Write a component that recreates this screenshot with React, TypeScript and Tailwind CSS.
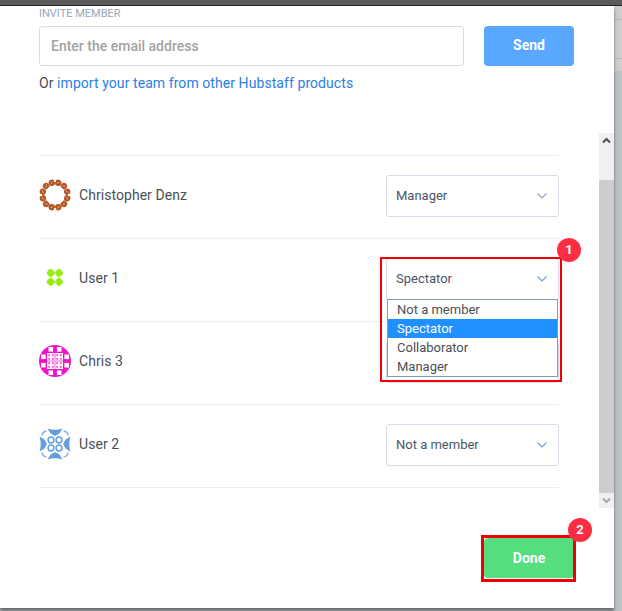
import type { ReactNode } from "react";

const font = { fontFamily: "Roboto, 'Liberation Sans', sans-serif" };

function Chevron({ active }: { active?: boolean }) {
  return (
    <svg width="12" height="8" viewBox="0 0 12 8" fill="none" className="shrink-0">
      <path d="M1.5 1.5 L6 6 L10.5 1.5" stroke={active ? "#6f9fd0" : "#9a9fb5"} strokeWidth="1.1" />
    </svg>
  );
}

function Avatar1() {
  const blobs = Array.from({ length: 12 }, (_, i) => 15 + i * 30);
  return (
    <svg width="32" height="32" viewBox="0 0 32 32">
      {blobs.map((a) => (
        <g key={a} transform={`rotate(${a} 16 16)`}>
          <circle cx="16" cy="3.4" r="3.2" fill="#b5521f" />
          <path d="M14.8 4.3 L17.2 2.4" stroke="#ffffff" strokeWidth="0.5" />
        </g>
      ))}
      {[0, 90, 180, 270].map((a) => (
        <path key={a} transform={`rotate(${a} 16 16)`} d="M16 0 L14.8 3 L17.2 3 Z" fill="#ffffff" />
      ))}
      <rect x="7.5" y="7.5" width="17" height="17" rx="5" fill="#ffffff" />
    </svg>
  );
}

function Avatar2() {
  const pts = [[11.7, 11], [20, 11], [11.7, 19.8], [20, 19.8]];
  return (
    <svg width="32" height="32" viewBox="0 0 32 32">
      <g fill="#96ee0e">
        {pts.map(([x, y]) => (
          <g key={`${x}-${y}`}>
            <circle cx={x} cy={y} r="3.4" />
            <path d={`M${x} ${y - 4.6} L${x + 4.4} ${y} L${x} ${y + 4.6} L${x - 4.4} ${y} Z`} />
          </g>
        ))}
      </g>
    </svg>
  );
}

function Avatar3() {
  const c = "#f012c8";
  const small = [10.2, 13.8, 18.2, 21.8];
  return (
    <svg width="32" height="32" viewBox="0 0 32 32">
      <circle cx="16" cy="16" r="16" fill={c} />
      <g fill="#fff">
        <rect x="9.5" y="2" width="4.6" height="4.6" />
        <rect x="17.9" y="2" width="4.6" height="4.6" />
        <rect x="9.5" y="25.4" width="4.6" height="4.6" />
        <rect x="17.9" y="25.4" width="4.6" height="4.6" />
        <rect x="2" y="9.5" width="4.6" height="4.6" />
        <rect x="2" y="17.9" width="4.6" height="4.6" />
        <rect x="25.4" y="9.5" width="4.6" height="4.6" />
        <rect x="25.4" y="17.9" width="4.6" height="4.6" />
        <rect x="8" y="8" width="16" height="16" />
      </g>
      <rect x="15.2" y="8" width="1.6" height="16" fill="#f7a0e6" />
      <rect x="8" y="15.2" width="16" height="1.6" fill="#f7a0e6" />
      {small.map((x) =>
        small.map((y) => (
          <rect key={`${x}-${y}`} x={x - 1} y={y - 1} width="2" height="2" fill="#f565da" />
        ))
      )}
    </svg>
  );
}

function Avatar4() {
  const c = "#639fd8";
  return (
    <svg width="32" height="32" viewBox="0 0 32 32">
      {[0, 90, 180, 270].map((a) => (
        <g key={a} transform={`rotate(${a} 16 16)`}>
          <path d="M8.5 0.5 Q16 3 23.5 0.5 L20.5 5.5 L16 8 L11.5 5.5 Z" fill={c} />
          <path d="M3 7.5 Q3.5 3.5 7.5 3" fill="none" stroke={c} strokeWidth="1.5" opacity="0.8" />
        </g>
      ))}
      <g fill="none" stroke={c} strokeWidth="1.5">
        <circle cx="12" cy="12" r="2.9" />
        <circle cx="20" cy="12" r="2.9" />
        <circle cx="12" cy="20" r="2.9" />
        <circle cx="20" cy="20" r="2.9" />
      </g>
    </svg>
  );
}

function Select({ value, active }: { value?: string; active?: boolean }) {
  return (
    <div className="w-[173px] h-[42px] -mt-[2px] border border-[#d9d9e8] rounded-[3px] bg-white flex items-center justify-between pl-[9px] pr-[10px] text-[13px] text-[#4a5568]">
      <span>{value}</span>
      <Chevron active={active} />
    </div>
  );
}

function Badge({ n, className }: { n: number; className: string }) {
  return (
    <div className={`absolute w-6 h-6 rounded-full bg-[#ff2d42] text-white text-[13px] font-bold flex items-center justify-center ${className}`}>
      {n}
    </div>
  );
}

function Row({ name, avatar, children }: { name: string; avatar: ReactNode; children: ReactNode }) {
  return (
    <div className="h-[83px] border-b border-[#ebebf2] flex items-center justify-between">
      <div className="flex items-center gap-2 -mt-[4px]">
        {avatar}
        <span className="text-sm tracking-[0.05px] text-[#4a4f57]">{name}</span>
      </div>
      {children}
    </div>
  );
}

export default function App() {
  return (
    <div style={font} className="relative w-[622px] h-[611px] overflow-hidden bg-[#bcc1c4] flex flex-col">
      <div className="h-[6px] shrink-0 bg-[#5a5a5c] border-b-[1px] border-[#26282a]" />
      <div className="absolute right-0 top-[6px] w-[8px] h-[65px] bg-[#cdcdcd] flex flex-col">
        <div className="h-[14px] border-b border-[#b4b4c0]" />
        <div className="h-[39px] border-b border-[#b4b4c8]" />
      </div>
      <div className="relative w-[614px] h-[602px] bg-white shadow-[0_3px_3px_rgba(0,0,0,0.45)]">
        <div className="pl-[39px] pr-[40px] pt-[2px]">
          <div className="text-[11px] leading-[11px] text-[#9aa5b8] h-[18px]">INVITE MEMBER</div>
          <div className="flex gap-5 h-[40px]">
            <div className="flex-1 border border-[#d9d9e8] rounded-[3px] flex items-center pl-[11px] text-sm font-medium text-[#a3a3a3]">
              Enter the email address
            </div>
            <div className="w-[90px] rounded-[4px] bg-[#58a8ff] text-white text-sm font-bold flex items-center justify-center pb-[2px]">
              Send
            </div>
          </div>
          <div className="mt-[7px] text-sm leading-5 tracking-[0.07px] text-[#4a4f57]">
            Or <span className="text-[#2a7ee8]">import your team from other Hubstaff products</span>
          </div>
        </div>

        <div className="relative mt-[40px] h-[375px] pl-[39px] pr-[55px]">
          <div className="absolute right-0 top-0 bottom-0 w-[15px] bg-[#cdcdcd] flex flex-col justify-between">
            <div className="h-[47px] bg-[#f0f0f0] flex justify-center pt-[4px]">
              <svg width="9" height="7" viewBox="0 0 9 7"><path d="M1 5.5 L4.5 2 L8 5.5" fill="none" stroke="#505050" strokeWidth="2" /></svg>
            </div>
            <div className="h-[15px] bg-[#f0f0f0] flex justify-center pt-[4px]">
              <svg width="9" height="7" viewBox="0 0 9 7"><path d="M1 1.5 L4.5 5 L8 1.5" fill="none" stroke="#a8a8a8" strokeWidth="2" /></svg>
            </div>
          </div>
          <div className="pt-[22px]">
            <div className="border-t border-[#ebebf2]" />
            <Row name="Christopher Denz" avatar={<Avatar1 />}><Select value="Manager" /></Row>
            <Row name="User 1" avatar={<Avatar2 />}><Select value="Spectator" active /></Row>
            <Row name="Chris 3" avatar={<Avatar3 />}><Select /></Row>
            <Row name="User 2" avatar={<Avatar4 />}><Select value="Not a member" active /></Row>
          </div>
        </div>

        <div className="flex justify-end pr-[40px] pt-[30px]">
          <div className="w-[90px] h-[40px] rounded-[4px] bg-[#55dd80] text-white text-sm font-bold flex items-center justify-center">
            Done
          </div>
        </div>

        <div className="absolute left-[387px] top-[293px] w-[171px] h-[78px] border border-[#7f9db9] bg-white text-[13px] leading-[19px] text-[#4a4f57]">
          <div className="pl-[9px]">Not a member</div>
          <div className="pl-[9px] bg-[#1e90ff] text-white">Spectator</div>
          <div className="pl-[9px]">Collaborator</div>
          <div className="pl-[9px]">Manager</div>
        </div>
        <div className="absolute left-[380px] top-[251px] w-[182px] h-[125px] border-[2px] border-[#f00000]" />
        <div className="absolute left-[481px] top-[529px] w-[95px] h-[47px] border-[3px] border-[#f00000]" />
        <Badge n={1} className="left-[557px] top-[232px]" />
        <Badge n={2} className="left-[568px] top-[512px]" />
      </div>
    </div>
  );
}
